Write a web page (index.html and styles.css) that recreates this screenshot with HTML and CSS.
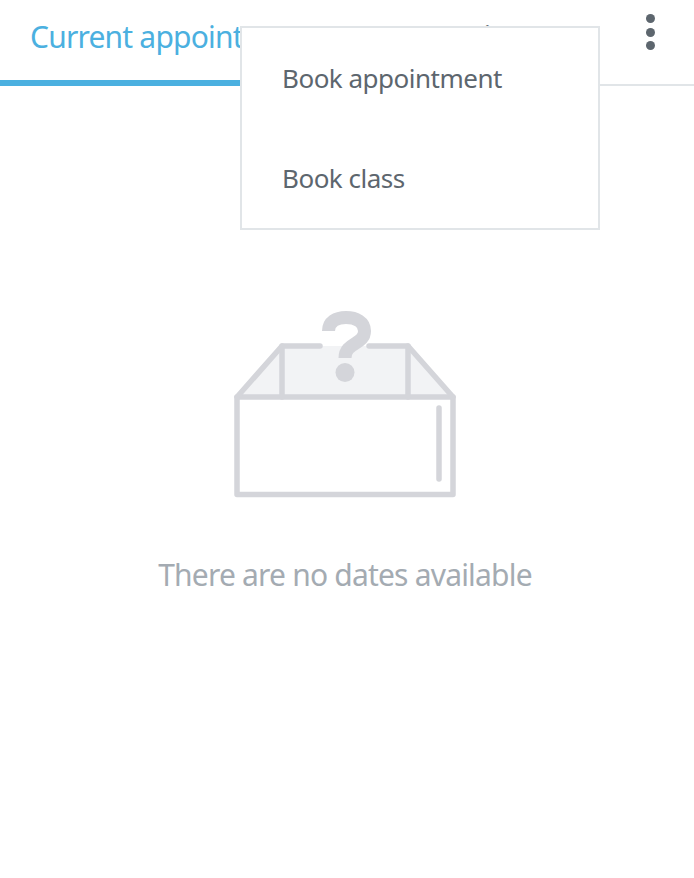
FILE: index.html
```html
<!DOCTYPE html>
<html lang="en">
<head>
<meta charset="utf-8">
<title>Appointments</title>
<link rel="stylesheet" href="styles.css">
</head>
<body>
<header class="tabs">
  <div class="tab tab-active">Current appointments</div>
  <div class="tab tab-past">Past appointments</div>
  <button class="more" aria-label="More">
    <span class="dot"></span><span class="dot"></span><span class="dot"></span>
  </button>
</header>
<nav class="menu">
  <a class="menu-item">Book appointment</a>
  <a class="menu-item">Book class</a>
</nav>
<main class="empty">
  <svg class="empty-icon" width="222" height="188" viewBox="234 310 222 188" aria-hidden="true">
    <path d="M237 397L282 346H408L453 397Z" fill="#f2f3f5"/>
    <g fill="none" stroke="#d4d5da" stroke-width="5.500" stroke-linecap="round" stroke-linejoin="round">
      <rect x="237" y="397" width="216" height="97.500"/>
      <path d="M237 397L282 346H320M369 346H408L453 397"/>
      <path d="M282 346V397M408 346V397"/>
      <path d="M439 408V479"/>
    </g>
    <path d="M328.500 331C328.500 322 336 317.500 346 317.500C356 317.500 364.500 322 364.500 331C364.500 345 345 342 345 358" fill="none" stroke="#d4d5da" stroke-width="13"/>
    <circle cx="345" cy="372.500" r="9.500" fill="#d4d5da"/>
  </svg>
  <p class="empty-text">There are no dates available</p>
</main>
</body>
</html>
```
FILE: styles.css
```css
html, body {
  margin: 0;
  padding: 0;
  background: #fff;
}
body {
  position: relative;
  height: 878px;
  overflow: hidden;
  font-family: "Noto Sans", "Open Sans", sans-serif;
}
.tabs {
  display: flex;
  height: 84px;
  border-bottom: 2px solid #e1e5e8;
}
.tab {
  width: 298px;
  box-sizing: border-box;
  padding: 16px 0 0 30px;
  font-size: 30px;
  line-height: 42px;
  letter-spacing: -0.8px;
  white-space: nowrap;
  color: #5d666e;
}
.tab-active {
  height: 86px;
  color: #4bb0e0;
  border-bottom: 6px solid #4bb0e0;
}
.tab-past {
  padding-left: 60px;
  letter-spacing: -1.6px;
}
.more {
  margin: 14px 38px 0 auto;
  padding: 0;
  width: 12px;
  height: 36px;
  border: 0;
  background: none;
  display: flex;
  flex-direction: column;
  justify-content: space-between;
  align-items: center;
}
.dot {
  width: 9px;
  height: 9px;
  border-radius: 50%;
  background: #5d666e;
}
.menu {
  position: absolute;
  left: 240px;
  top: 26px;
  width: 360px;
  height: 204px;
  box-sizing: border-box;
  border: 2px solid #e1e5e8;
  background: #fff;
  display: flex;
  flex-direction: column;
}
.menu-item {
  height: 100px;
  padding-left: 40px;
  font-size: 26px;
  line-height: 100px;
  letter-spacing: -0.5px;
  color: #5d666e;
}
.empty {
  display: flex;
  flex-direction: column;
  align-items: center;
  padding-top: 224px;
  padding-right: 4px;
}
.empty-icon {
  display: block;
}
.empty-text {
  margin: 55px 0 0;
  font-size: 30px;
  line-height: 44px;
  letter-spacing: -0.8px;
  color: #a4abb2;
}
```
